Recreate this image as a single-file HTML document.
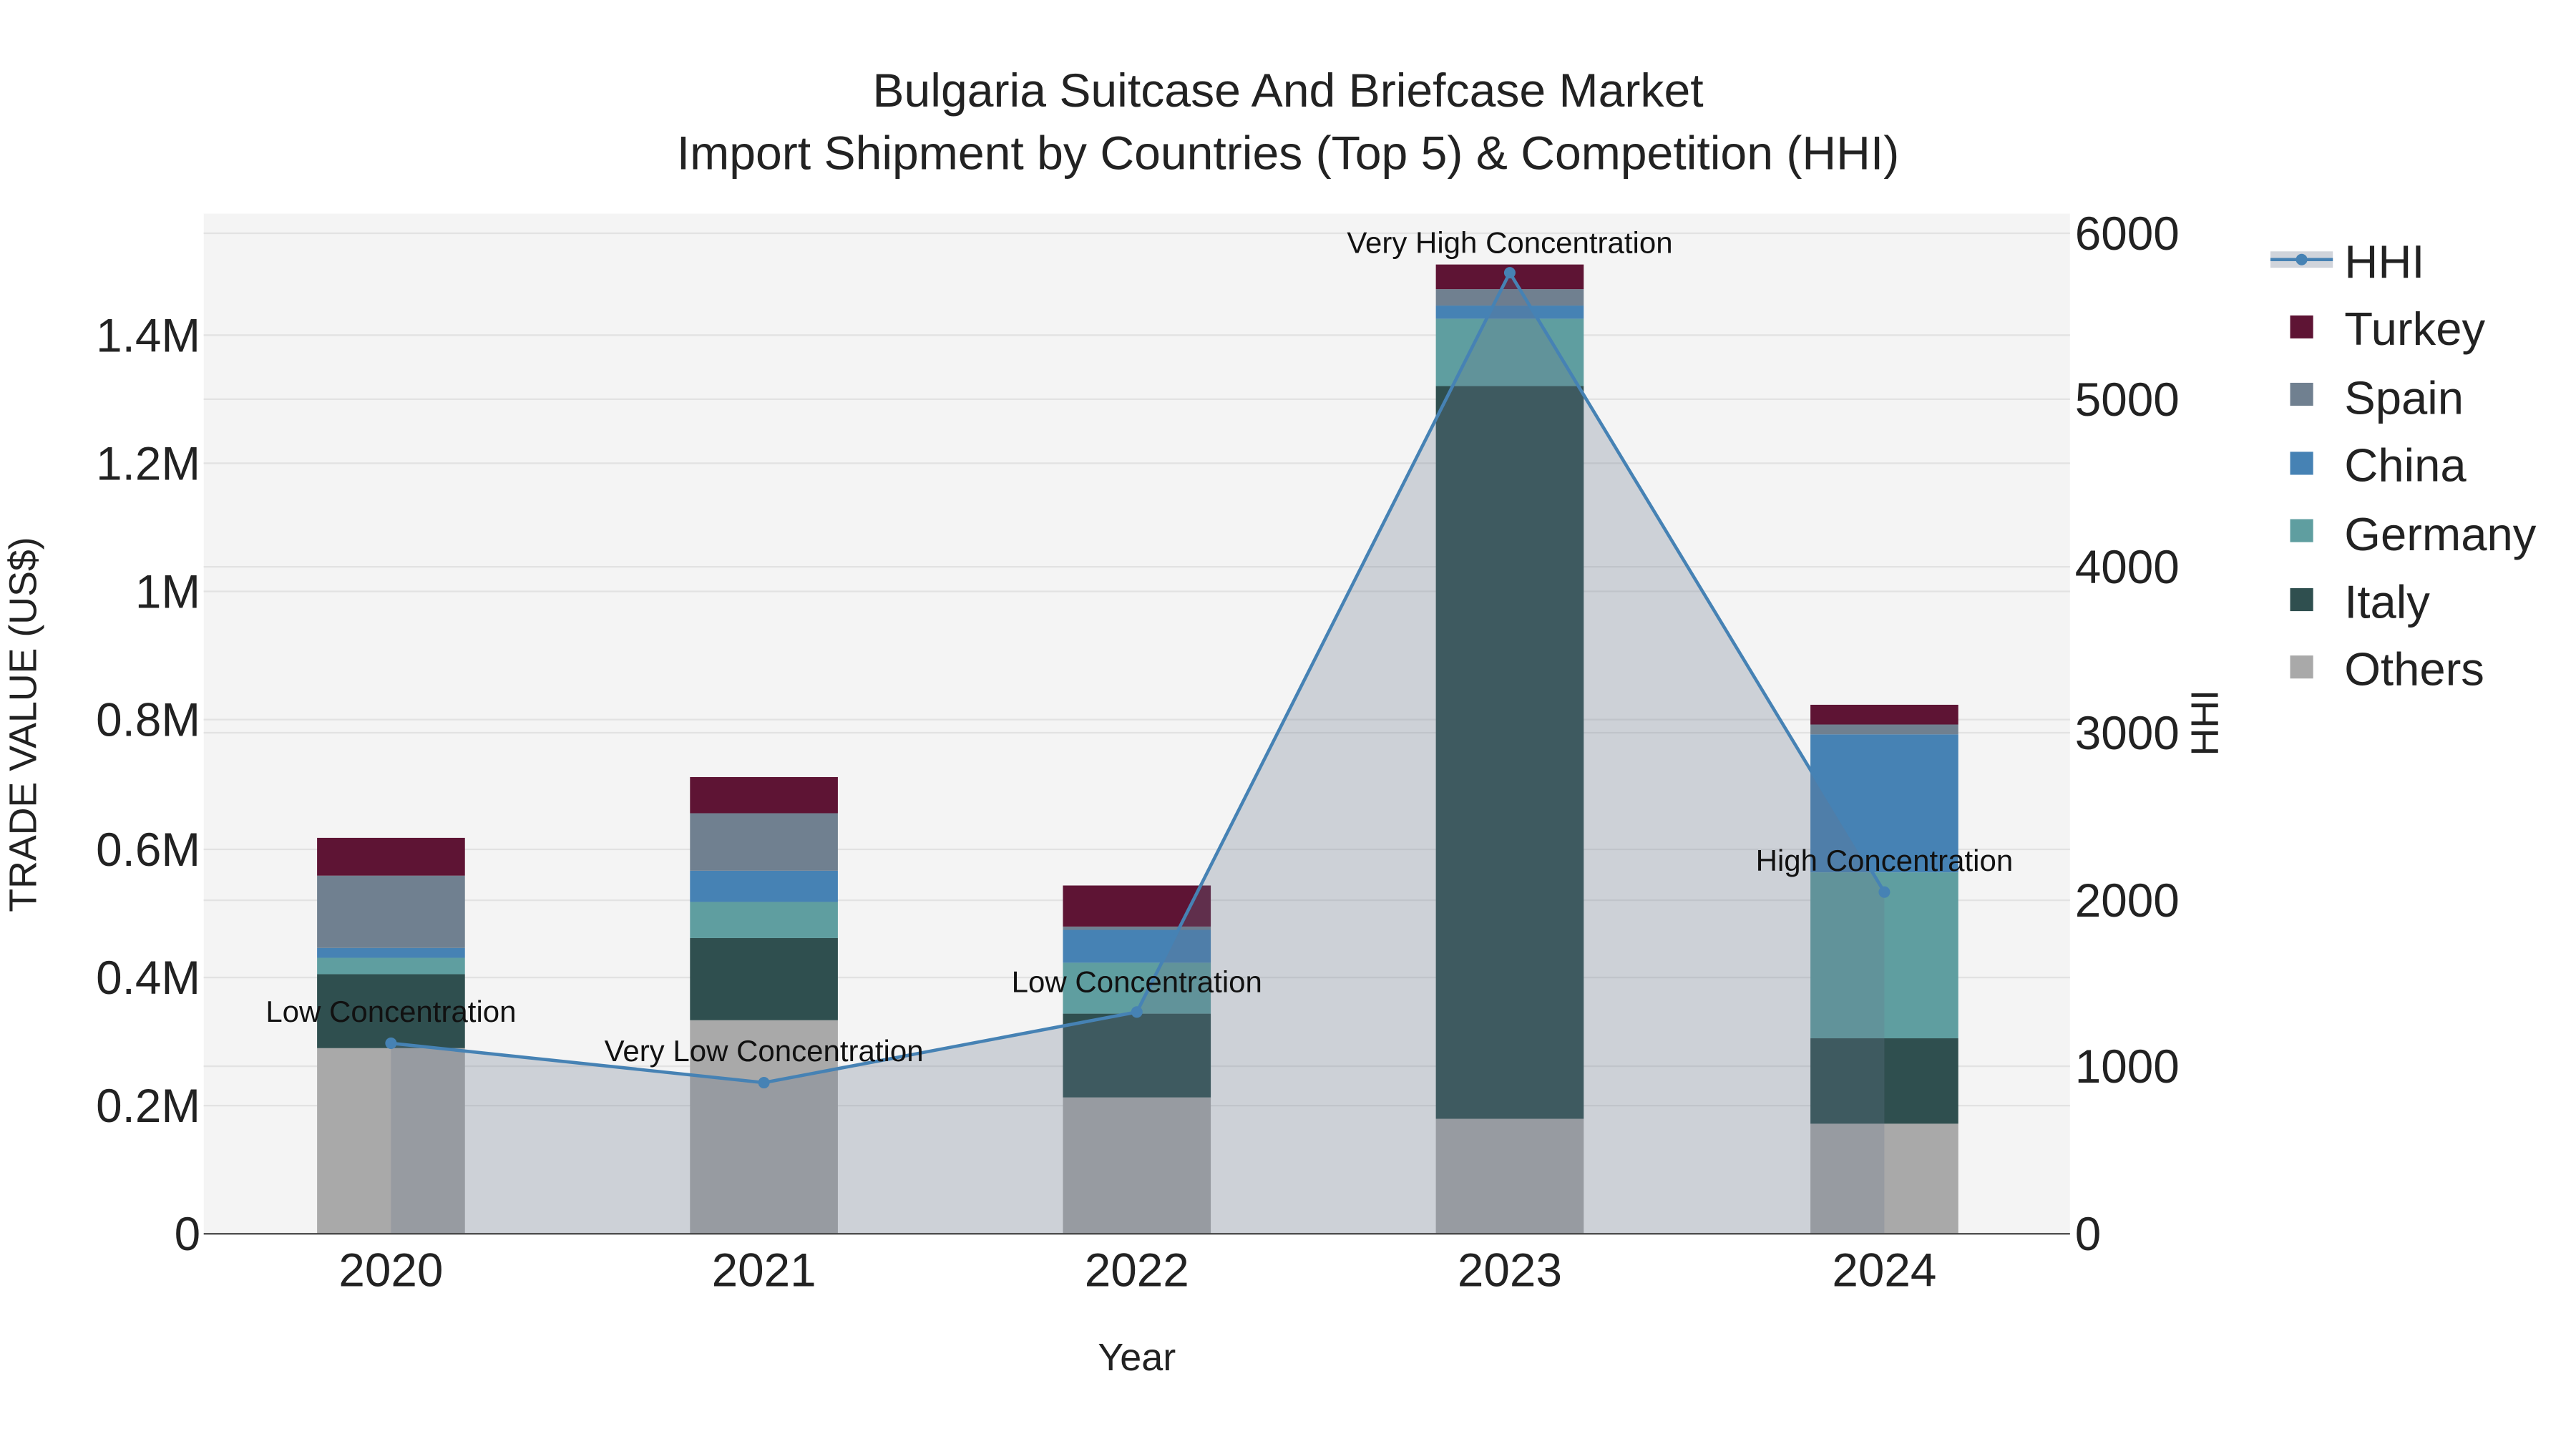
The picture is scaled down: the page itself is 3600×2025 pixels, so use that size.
<!DOCTYPE html>
<html><head><meta charset="utf-8"><style>html,body{margin:0;padding:0;background:#fff}svg{display:block}</style></head><body>
<svg width="3600" height="2025" viewBox="0 0 1568 882" xmlns="http://www.w3.org/2000/svg" font-family="Liberation Sans, Arial, sans-serif">
<rect width="1568" height="882" fill="#fff"/>
<rect x="124" y="130" width="1136" height="621" fill="#f4f4f4"/>
<g stroke="#e2e2e2" stroke-width="1">
<line x1="124" x2="1260" y1="673" y2="673"/><line x1="124" x2="1260" y1="595" y2="595"/><line x1="124" x2="1260" y1="517" y2="517"/><line x1="124" x2="1260" y1="438" y2="438"/><line x1="124" x2="1260" y1="360" y2="360"/><line x1="124" x2="1260" y1="282" y2="282"/><line x1="124" x2="1260" y1="204" y2="204"/>
<line x1="124" x2="1260" y1="649" y2="649"/><line x1="124" x2="1260" y1="548" y2="548"/><line x1="124" x2="1260" y1="446" y2="446"/><line x1="124" x2="1260" y1="345" y2="345"/><line x1="124" x2="1260" y1="243" y2="243"/><line x1="124" x2="1260" y1="142" y2="142"/>
</g>
<g>
<rect x="193" y="638" width="90" height="113" fill="#a9a9a9"/><rect x="193" y="593" width="90" height="45" fill="#2f4f4f"/><rect x="193" y="583" width="90" height="10" fill="#5f9ea0"/><rect x="193" y="577" width="90" height="6" fill="#4682b4"/><rect x="193" y="533" width="90" height="44" fill="#708090"/><rect x="193" y="510" width="90" height="23" fill="#5e1434"/>
<rect x="420" y="621" width="90" height="130" fill="#a9a9a9"/><rect x="420" y="571" width="90" height="50" fill="#2f4f4f"/><rect x="420" y="549" width="90" height="22" fill="#5f9ea0"/><rect x="420" y="530" width="90" height="19" fill="#4682b4"/><rect x="420" y="495" width="90" height="35" fill="#708090"/><rect x="420" y="473" width="90" height="22" fill="#5e1434"/>
<rect x="647" y="668" width="90" height="83" fill="#a9a9a9"/><rect x="647" y="617" width="90" height="51" fill="#2f4f4f"/><rect x="647" y="586" width="90" height="31" fill="#5f9ea0"/><rect x="647" y="566" width="90" height="20" fill="#4682b4"/><rect x="647" y="564" width="90" height="2" fill="#708090"/><rect x="647" y="539" width="90" height="25" fill="#5e1434"/>
<rect x="874" y="681" width="90" height="70" fill="#a9a9a9"/><rect x="874" y="235" width="90" height="446" fill="#2f4f4f"/><rect x="874" y="194" width="90" height="41" fill="#5f9ea0"/><rect x="874" y="186" width="90" height="8" fill="#4682b4"/><rect x="874" y="176" width="90" height="10" fill="#708090"/><rect x="874" y="161" width="90" height="15" fill="#5e1434"/>
<rect x="1102" y="684" width="90" height="67" fill="#a9a9a9"/><rect x="1102" y="632" width="90" height="52" fill="#2f4f4f"/><rect x="1102" y="531" width="90" height="101" fill="#5f9ea0"/><rect x="1102" y="447" width="90" height="84" fill="#4682b4"/><rect x="1102" y="441" width="90" height="6" fill="#708090"/><rect x="1102" y="429" width="90" height="12" fill="#5e1434"/>
</g>
<polygon points="238,751 238,635 465,659 692,616 919,166 1147,543 1147,751" fill="rgba(105,118,140,0.28)"/>
<line x1="124" x2="1260" y1="751" y2="751" stroke="#444" stroke-width="1"/>
<polyline points="238,635 465,659 692,616 919,166 1147,543" fill="none" stroke="#4682b4" stroke-width="2"/>
<g fill="#4682b4"><circle cx="238" cy="635" r="3.5"/><circle cx="465" cy="659" r="3.5"/><circle cx="692" cy="616" r="3.5"/><circle cx="919" cy="166" r="3.5"/><circle cx="1147" cy="543" r="3.5"/></g>
<g font-size="18.3" fill="#111" text-anchor="middle">
<text x="238" y="622">Low Concentration</text><text x="465" y="646">Very Low Concentration</text><text x="692" y="604">Low Concentration</text><text x="919" y="154">Very High Concentration</text><text x="1147" y="530">High Concentration</text>
</g>
<g font-size="28.6" fill="#222" text-anchor="end">
<text x="122" y="761">0</text><text x="122" y="683">0.2M</text><text x="122" y="605">0.4M</text><text x="122" y="527">0.6M</text><text x="122" y="448">0.8M</text><text x="122" y="370">1M</text><text x="122" y="292">1.2M</text><text x="122" y="214">1.4M</text>
</g>
<g font-size="28.6" fill="#222">
<text x="1263" y="761">0</text><text x="1263" y="659">1000</text><text x="1263" y="558">2000</text><text x="1263" y="456">3000</text><text x="1263" y="355">4000</text><text x="1263" y="253">5000</text><text x="1263" y="152">6000</text>
</g>
<g font-size="28.6" fill="#222" text-anchor="middle">
<text x="238" y="783">2020</text><text x="465" y="783">2021</text><text x="692" y="783">2022</text><text x="919" y="783">2023</text><text x="1147" y="783">2024</text>
</g>
<text x="692" y="834" font-size="23.5" fill="#222" text-anchor="middle">Year</text>
<text transform="translate(22,441) rotate(-90)" font-size="23.4" fill="#222" text-anchor="middle">TRADE VALUE (US$)</text>
<text transform="translate(1350,440) rotate(-90)" font-size="23.4" fill="#222" text-anchor="middle">HHI</text>
<g font-size="28.8" fill="#222" text-anchor="middle">
<text x="784" y="65">Bulgaria Suitcase And Briefcase Market</text>
<text x="784" y="103">Import Shipment by Countries (Top 5) &amp; Competition (HHI)</text>
</g>
<g>
<rect x="1382" y="153" width="38" height="10" fill="rgba(101,114,137,0.3)"/>
<line x1="1382" x2="1420" y1="158" y2="158" stroke="#4682b4" stroke-width="2"/><circle cx="1401" cy="158" r="3.5" fill="#4682b4"/>
<rect x="1394" y="192" width="14" height="14" fill="#5e1434"/><rect x="1394" y="233" width="14" height="14" fill="#708090"/><rect x="1394" y="275" width="14" height="14" fill="#4682b4"/><rect x="1394" y="316" width="14" height="14" fill="#5f9ea0"/><rect x="1394" y="358" width="14" height="14" fill="#2f4f4f"/><rect x="1394" y="399" width="14" height="14" fill="#a9a9a9"/>
<g font-size="28.4" fill="#222">
<text x="1427" y="169">HHI</text><text x="1427" y="210">Turkey</text><text x="1427" y="252">Spain</text><text x="1427" y="293">China</text><text x="1427" y="335">Germany</text><text x="1427" y="376">Italy</text><text x="1427" y="417">Others</text>
</g>
</g>
</svg>
</body></html>
